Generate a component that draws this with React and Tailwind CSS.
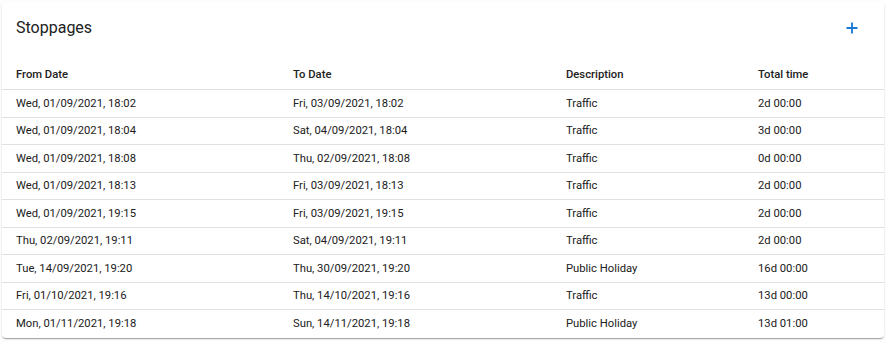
import React from "react";

const rows = [
  ["Wed, 01/09/2021, 18:02", "Fri, 03/09/2021, 18:02", "Traffic", "2d 00:00"],
  ["Wed, 01/09/2021, 18:04", "Sat, 04/09/2021, 18:04", "Traffic", "3d 00:00"],
  ["Wed, 01/09/2021, 18:08", "Thu, 02/09/2021, 18:08", "Traffic", "0d 00:00"],
  ["Wed, 01/09/2021, 18:13", "Fri, 03/09/2021, 18:13", "Traffic", "2d 00:00"],
  ["Wed, 01/09/2021, 19:15", "Fri, 03/09/2021, 19:15", "Traffic", "2d 00:00"],
  ["Thu, 02/09/2021, 19:11", "Sat, 04/09/2021, 19:11", "Traffic", "2d 00:00"],
  ["Tue, 14/09/2021, 19:20", "Thu, 30/09/2021, 19:20", "Public Holiday", "16d 00:00"],
  ["Fri, 01/10/2021, 19:16", "Thu, 14/10/2021, 19:16", "Traffic", "13d 00:00"],
  ["Mon, 01/11/2021, 19:18", "Sun, 14/11/2021, 19:18", "Public Holiday", "13d 01:00"],
];

const cols = "grid grid-cols-[277px_273px_192px_1fr]";

const App = () => {
  return (
    <div className="min-h-screen bg-white pt-[2px] pl-[2px] pr-[4px] font-['Roboto',sans-serif] text-[#212121]">
      <div className="rounded-[4px] bg-white shadow-[0_2px_1px_-1px_rgba(0,0,0,0.2),0_1px_1px_0_rgba(0,0,0,0.14),0_1px_3px_0_rgba(0,0,0,0.12)] overflow-hidden">
        <div className="h-[51px] flex items-center justify-between pl-[14px] pr-[25px] pt-[1px]">
          <h2 className="text-[16px] leading-none">Stoppages</h2>
          <button className="w-[14px] h-[14px] flex items-center justify-center text-[#1976d2]">
            <svg width="12" height="12" viewBox="0 0 12 12" fill="none" stroke="currentColor" strokeWidth="1.8">
              <path d="M6 0.5v11M0.5 6h11" />
            </svg>
          </button>
        </div>

        <div className={`${cols} h-[37px] items-end pb-[7px] border-b border-[#e0e0e0] text-[11.25px] font-medium leading-[15px]`}>
          <div className="pl-[14px]">From Date</div>
          <div className="pl-[14px]">To Date</div>
          <div className="pl-[14px]">Description</div>
          <div className="pl-[14px]">Total time</div>
        </div>

        {rows.map((row, i) => (
          <div
            key={i}
            className={`${cols} h-[27.5px] items-center text-[11.25px] leading-[15px] ${i < rows.length - 1 ? "border-b border-[#e0e0e0]" : ""}`}
          >
            {row.map((cell, j) => (
              <div key={j} className="pl-[14px]">{cell}</div>
            ))}
          </div>
        ))}
      </div>
    </div>
  );
};

export default App;
